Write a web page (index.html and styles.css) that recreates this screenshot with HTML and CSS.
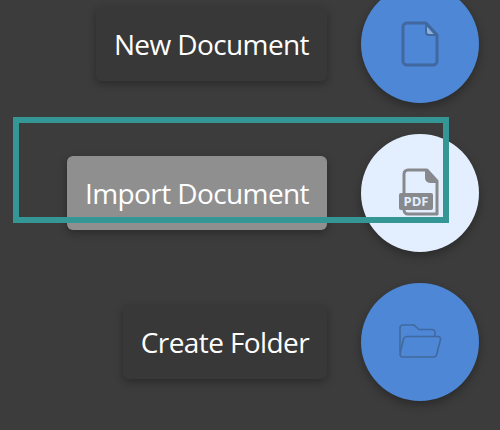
FILE: index.html
```html
<!DOCTYPE html>
<html lang="en">
<head>
<meta charset="utf-8">
<title>Add menu</title>
<link rel="stylesheet" href="styles.css">
</head>
<body>
<main class="menu">
  <div class="row">
    <div class="label">New Document</div>
    <div class="fab">
      <svg class="icon" width="38" height="46" viewBox="0 0 38 46" fill="none">
        <path d="M6 2H25L36 14V40A4 4 0 0 1 32 44H6A4 4 0 0 1 2 40V6A4 4 0 0 1 6 2Z" stroke="#41699f" stroke-width="3" stroke-linejoin="round"/>
        <path d="M25 3L35 14H28A3 3 0 0 1 25 11Z" fill="#8fb0dc" stroke="#41699f" stroke-width="2" stroke-linejoin="round"/>
      </svg>
    </div>
  </div>
  <div class="row">
    <div class="label label-active">Import Document</div>
    <div class="fab fab-active">
      <svg class="icon" width="42" height="50" viewBox="0 0 42 50" fill="none">
        <path d="M9 2H28L38 13V46H9A4 4 0 0 1 5 42V6A4 4 0 0 1 9 2Z" stroke="#87898d" stroke-width="3" stroke-linejoin="round"/>
        <path d="M27 3L38 14H31A4 4 0 0 1 27 10Z" fill="#87898d" stroke="#87898d" stroke-width="2" stroke-linejoin="round"/>
        <rect x="0" y="25" width="34" height="17" rx="2" fill="#87898d"/>
        <text class="pdf" x="17" y="38" text-anchor="middle">PDF</text>
      </svg>
    </div>
  </div>
  <div class="row">
    <div class="label">Create Folder</div>
    <div class="fab">
      <svg class="icon icon-folder" width="44" height="36" viewBox="0 0 44 36" fill="none" stroke="#41699f" stroke-width="1.6" stroke-linejoin="round">
        <path d="M2 29V5A3 3 0 0 1 5 2H14A3 3 0 0 1 17 3L21 6.500H34A3 3 0 0 1 37 9.500V13"/>
        <path d="M8.500 13.500H40A2.500 2.500 0 0 1 42.500 16.500L38.500 32A3 3 0 0 1 35.500 34H5A3 3 0 0 1 2 31L5.500 16A3.500 3.500 0 0 1 8.500 13.500Z"/>
      </svg>
    </div>
  </div>
  <div class="highlight"></div>
</main>
</body>
</html>
```
FILE: styles.css
```css
html, body {
  margin: 0;
  padding: 0;
  width: 500px;
  height: 430px;
  overflow: hidden;
  background: #3c3c3c;
}

.menu {
  position: relative;
  display: flex;
  flex-direction: column;
  gap: 31px;
  margin-top: -15px;
  padding-right: 21px;
  font-family: "Open Sans", sans-serif;
}

.row {
  display: flex;
  align-items: center;
  justify-content: flex-end;
  gap: 34px;
  height: 118px;
}

.label {
  height: 74px;
  padding: 0 18px;
  display: flex;
  align-items: center;
  background: #383838;
  border-radius: 6px;
  box-shadow: 0 3px 9px rgba(0, 0, 0, 0.3);
  color: #fff;
  font-size: 28px;
  letter-spacing: -0.6px;
  white-space: nowrap;
}

.label-active {
  background: #8f8f8f;
}

.fab {
  width: 118px;
  height: 118px;
  flex: none;
  display: flex;
  align-items: center;
  justify-content: center;
  border-radius: 50%;
  background: #4d87d6;
  box-shadow: 0 4px 10px rgba(0, 0, 0, 0.3);
}

.fab-active {
  background: #e3eefe;
}

.icon-folder {
  margin-bottom: 3px;
}

.pdf {
  fill: #e3eefe;
  font-family: "Open Sans", sans-serif;
  font-size: 13px;
  font-weight: 700;
}

.highlight {
  position: absolute;
  left: 13px;
  top: 132px;
  width: 424px;
  height: 94px;
  border: 6px solid #359696;
}
```
